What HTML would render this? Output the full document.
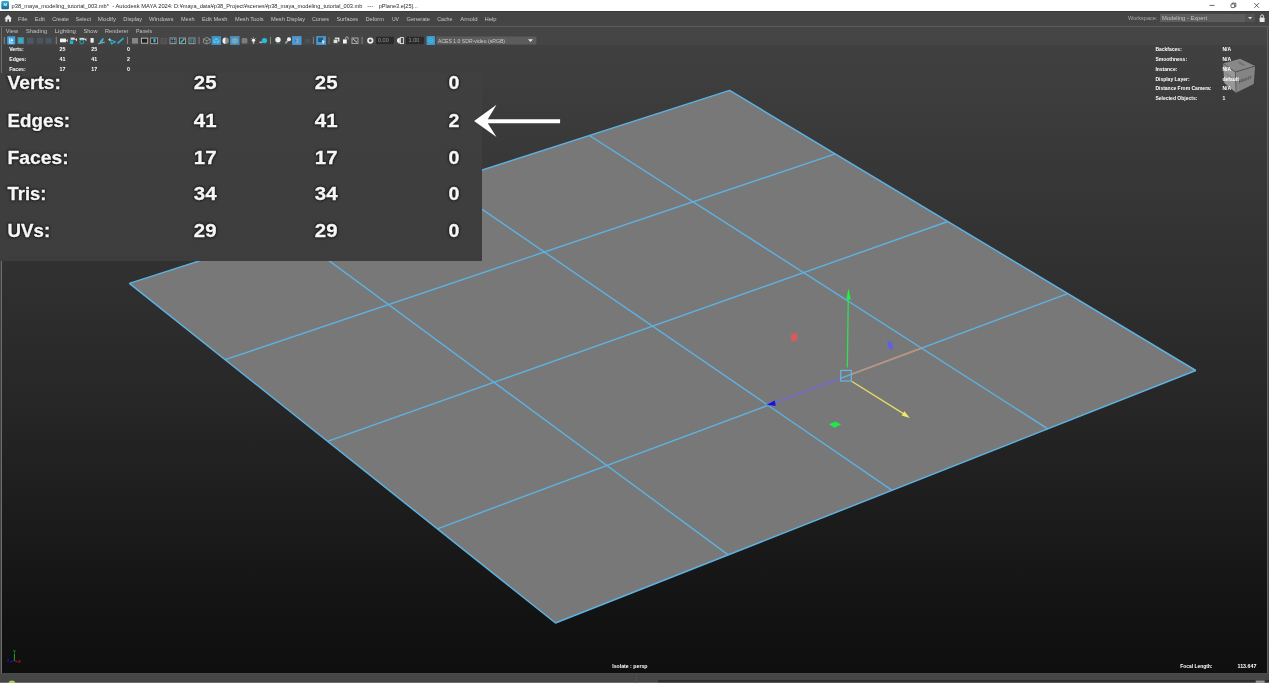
<!DOCTYPE html>
<html><head><meta charset="utf-8"><title>Maya</title>
<style>
html,body{margin:0;padding:0;background:#454545;overflow:hidden}
body{width:1269px;height:683px;position:relative;font-family:"Liberation Sans",Arial,sans-serif}
div,i,svg{position:absolute;display:block}
i{filter:blur(0.4px)}
#title{left:0;top:0;width:1269px;height:11.3px;background:#fff}
#menubar{left:0;top:11.3px;width:1269px;height:15px;background:#454545}
#hline{left:0;top:26.2px;width:1269px;height:0.7px;background:#5c5c5c}
#vp{left:2.2px;top:44.8px;width:1264.4px;height:628px;background:linear-gradient(#404040 0%,#313131 34.6%,#262626 58.2%,#121212 91.6%,#0f0f0f 100%)}
#lb1{left:0;top:26.5px;width:0.7px;height:656px;background:#444}
#lb2{left:0.7px;top:26.5px;width:1.4px;height:647px;background:#6c6c6c}
#bbar{left:0;top:672.85px;width:1269px;height:11px;background:linear-gradient(#4c4c4c,#464646 2px,#454545)}
#bbar2{left:657.9px;top:679.9px;width:612px;height:1.9px;background:#2e2e2e}
#bbar3{left:0;top:681.8px;width:1269px;height:2px;background:linear-gradient(90deg,#6e6e6e 657.9px,#5a5a5a 657.9px)}
#panel{left:0;top:72.5px;width:481.6px;height:188.9px;background:linear-gradient(#404040,#3d3d3d)}
svg text{font-family:"Liberation Sans",Arial,sans-serif}
svg text.big{font-size:18.8px;filter:drop-shadow(0 0 0.8px rgba(22,22,22,1)) drop-shadow(0 0 0.8px rgba(22,22,22,.9)) blur(0.55px);font-weight:bold;fill:#f6f6f6;stroke:#f6f6f6;stroke-width:.3px}
#rb{left:1266.6px;top:26.5px;width:1.2px;height:646.5px;background:#5e5e5e}
#tl{left:0;top:11.2px;width:1269px;height:1.1px;background:#3b3b3b}
#wsb{left:1245px;top:14px;width:9.6px;height:8.4px;background:#525252}
#ws{left:1160.3px;top:14px;width:94.3px;height:8.4px;background:#5d5d5d}
</style></head><body>
<div id="title"></div>
<div id="menubar"></div>
<div id="hline"></div>
<div id="vp"></div>
<div id="lb1"></div><div id="lb2"></div>
<div id="bbar"></div><div id="bbar2"></div><div id="bbar3"></div>
<div id="ws"></div><div id="wsb"></div><div id="rb"></div><div id="tl"></div>

<svg width="1269" height="683" viewBox="0 0 1269 683" style="left:0;top:0;filter:blur(0.3px)">
<polygon points="729.6,90.4 1195.8,370.5 555.5,623.0 129.4,283.4" fill="#787878" stroke="#5eb2e2" stroke-width="1.5" stroke-linejoin="bevel"/>
<line x1="835.3" y1="153.9" x2="225.1" y2="359.7" stroke="#5eb2e2" stroke-width="1.4"/>
<line x1="589.4" y1="135.5" x2="1047.8" y2="428.9" stroke="#5eb2e2" stroke-width="1.4"/>
<line x1="947.8" y1="221.5" x2="327.5" y2="441.3" stroke="#5eb2e2" stroke-width="1.4"/>
<line x1="443.0" y1="182.6" x2="892.1" y2="490.3" stroke="#5eb2e2" stroke-width="1.4"/>
<line x1="1067.7" y1="293.6" x2="437.4" y2="528.8" stroke="#5eb2e2" stroke-width="1.4"/>
<line x1="289.8" y1="231.8" x2="728.2" y2="554.9" stroke="#5eb2e2" stroke-width="1.4"/>
<g fill="none" stroke-linecap="butt">
<line x1="851.5" y1="374.3" x2="921.6" y2="348.1" stroke="#bd927a" stroke-width="1.7"/>
<line x1="840.5" y1="378.4" x2="770" y2="404.7" stroke="#7866be" stroke-width="1.7"/>
<line x1="847.3" y1="367.6" x2="848.3" y2="298" stroke="#30e050" stroke-width="1.3"/>
<line x1="851.6" y1="381.2" x2="903" y2="413.4" stroke="#e6de64" stroke-width="1.3"/>
<rect x="840.7" y="370.4" width="10.6" height="10.6" stroke="#6cb6de" stroke-width="1.2"/>
</g>
<polygon points="848.5,288.3 850.8,299.6 846.2,299.6" fill="#20f040"/>
<polygon points="909.8,418 901.6,415.4 904.4,411.2" fill="#f0e868"/>
<polygon points="766.3,404.9 774.8,400.6 775.8,405.8" fill="#1212f0"/>
<polygon points="790.8,334.6 797.2,332.8 797.6,340.2 791.2,341.8" fill="#d65c5c"/>
<polygon points="887.6,340.2 892.8,343.2 892.6,350.4 887.6,347" fill="#6260e2"/>
<polygon points="829,424.2 835.5,421.4 841,424.6 834.5,427.8" fill="#1cea4c"/>

<g opacity="0.93">
<polygon points="1223.1,63.6 1240,58.7 1255.1,66.1 1235.4,72" fill="#8e8e8e"/>
<polygon points="1223.1,63.6 1235.4,72 1236.1,92.8 1224.3,83" fill="#a0a0a0"/>
<polygon points="1235.4,72 1255.1,66.1 1253.7,84 1236.1,92.8" fill="#8a8a8a"/>
<polyline points="1223.1,63.6 1235.4,72 1255.1,66.1" fill="none" stroke="#4c4c4c" stroke-width="0.8"/>
<line x1="1235.4" y1="72" x2="1236.1" y2="92.8" stroke="#5a5a5a" stroke-width="0.8"/>
<text transform="matrix(1,-0.36,0,1,1238.8,83.2)" font-size="4.3" font-weight="bold" fill="#3c3c3c" opacity=".75" textLength="13" lengthAdjust="spacingAndGlyphs">RIGHT</text>
<text transform="matrix(0.83,0.5,-0.9,0.3,1237.2,62.2)" font-size="3.6" font-weight="bold" fill="#444" opacity=".7">TOP</text>
<text transform="matrix(1,0.7,0,1,1225.2,75)" font-size="4" font-weight="bold" fill="#555" opacity=".5" textLength="9.5" lengthAdjust="spacingAndGlyphs">FRONT</text>
</g>
<g stroke-width="1" fill="none">
<line x1="14.4" y1="660.9" x2="14.4" y2="653.6" stroke="#10b020"/>
<line x1="14.4" y1="660.7" x2="10" y2="661.8" stroke="#1818c0"/>
<line x1="14.4" y1="660.7" x2="17.6" y2="661.8" stroke="#c01818"/>
</g>
</svg>
<svg width="1269" height="683" viewBox="0 0 1269 683" style="left:0;top:0;filter:blur(0.4px)">
<g id="tb">
<g fill="#8c8c8c">
<rect x="3.8" y="36.8" width="0.9" height="7.2"/><rect x="55.8" y="36.8" width="0.9" height="7.2"/><rect x="127" y="36.8" width="0.9" height="7.2"/>
<rect x="198.6" y="36.8" width="0.9" height="7.2"/><rect x="270.1" y="36.8" width="0.9" height="7.2"/><rect x="312.9" y="36.8" width="0.9" height="7.2"/>
<rect x="328.6" y="37" width="0.8" height="7" opacity=".7"/><rect x="361.6" y="36.8" width="0.9" height="7.2"/>
</g>
<!-- group 1 -->
<rect x="7.2" y="36.2" width="8" height="8.2" rx=".6" fill="#38a4e0"/>
<path d="M9.2 38 h1 v4.6 h3.2 v.9 h-4.2z" fill="#e8f6fc" opacity=".9"/><path d="M11.9 38 l1.5 3.2 h-3z" fill="#f4fbfe"/>
<rect x="17.5" y="37" width="6.6" height="7" fill="#6a7a80"/><rect x="18.5" y="38" width="4.6" height="5" fill="#22b4d4"/>
<rect x="27" y="37.6" width="6.6" height="6.2" fill="#4a5968"/><rect x="37" y="37.8" width="6" height="5.8" fill="#4d555c"/><rect x="45.6" y="37.8" width="6" height="5.8" fill="#485866"/>
<!-- group 2 -->
<rect x="60" y="38.6" width="6" height="3.7" rx=".5" fill="#f0f0f0"/><polygon points="66,40.4 67.7,39 67.7,42.2" fill="#e0e0e0"/>
<rect x="70.6" y="37.6" width="4.2" height="2.2" fill="#dcdcdc"/><polygon points="75,39.6 77,38 77,41.6" fill="#e4e4e4"/><rect x="69.8" y="40.3" width="3.4" height="3.7" fill="#22b0cc"/>
<rect x="79.5" y="37.9" width="5" height="2" fill="#dcdcdc"/><polygon points="84.5,39.4 86.3,38 86.3,41.2" fill="#e4e4e4"/><circle cx="81.7" cy="41.9" r="1.9" fill="none" stroke="#28a8bc" stroke-width="1"/>
<rect x="90.5" y="38" width="3.2" height="4.7" rx=".6" fill="#ececec"/>
<path d="M99.3 43.2 Q100 39.5 103.6 37.8 Q104 41 101.2 43z" fill="#28b8d0"/><path d="M98 43.8 L104.8 42.2" stroke="#b0b0b0" stroke-width=".9"/>
<path d="M108.4 39.6 h2.6 M109.7 38.2 v2.8" stroke="#e0e0e0" stroke-width=".8"/><path d="M110.6 40 L115.4 41.8 L111.4 44z" fill="none" stroke="#28b4c8" stroke-width="1.1"/>
<path d="M117.6 43.4 L123.5 38.2" stroke="#2cb0d4" stroke-width="1.6"/>
<!-- group 3 -->
<rect x="132" y="38" width="6" height="5.6" fill="#868686"/>
<rect x="141.5" y="38.2" width="6.2" height="5" fill="#1e1e1e" stroke="#b4b4b4" stroke-width="1"/>
<rect x="150.6" y="38" width="7" height="5.6" fill="#2a2a2a" stroke="#9a9a9a" stroke-width="1"/><rect x="153.4" y="38.8" width="2.2" height="3.8" rx="1" fill="#30c0e0"/>
<rect x="161" y="38.4" width="5.6" height="5" fill="#4e4e4e" stroke="#5c5c5c" stroke-width=".8"/>
<rect x="170" y="38" width="6" height="5.6" fill="#333" stroke="#9a9a9a" stroke-width="1"/><path d="M171.6 39.6 h1.2 M173.8 39.6 h1.2 M171.6 42 h1.2 M173.8 42 h1.2" stroke="#40c0d8" stroke-width="1"/>
<rect x="179.5" y="38" width="6" height="5.6" fill="#333" stroke="#9a9a9a" stroke-width="1"/><path d="M180.6 42.8 L184.4 38.8" stroke="#38c0d8" stroke-width="1.6"/>
<rect x="189" y="38" width="6" height="5.6" fill="#2a2a2a" stroke="#9a9a9a" stroke-width="1"/><path d="M191 39 v3.8 M193.2 39 v3.8" stroke="#38c0d8" stroke-width="1"/>
<!-- group 4 -->
<path d="M206.8 37.4 L210.2 39.2 V42.6 L206.8 44 L203.4 42.6 V39.2z M203.4 39.2 L206.8 40.8 L210.2 39.2 M206.8 40.8 V44" fill="none" stroke="#a0a0a0" stroke-width=".8"/>
<rect x="211.6" y="36.1" width="9.4" height="8.8" fill="#3f93cc"/><path d="M216.3 37.8 L219.4 39.4 V42.6 L216.3 43.8 L213.2 42.6 V39.4z" fill="#58c4e0"/><path d="M213.2 39.4 L216.3 40.8 L219.4 39.4 M216.3 40.8 V43.8" stroke="#2a88b0" stroke-width=".6" fill="none"/>
<path d="M225.7 37.6 a3.2 3.2 0 0 0 0 6.4z" fill="#f2f2f2"/><path d="M225.7 37.6 a3.2 3.2 0 0 1 0 6.4z" fill="#8a8a8a"/>
<rect x="230.1" y="36.1" width="9.4" height="8.8" fill="#4a90c8"/><path d="M234.8 37.8 L237.9 39.4 V42.6 L234.8 43.8 L231.7 42.6 V39.4z" fill="#8aa8b0"/><path d="M232.6 40.6 h1.6 M235.4 40.6 h1.6 M232.6 42.2 h1.6 M235.4 42.2 h1.6" stroke="#30b8c8" stroke-width=".8"/>
<rect x="241.6" y="38" width="5.8" height="5.6" rx="1.4" fill="#7c7c7c"/>
<circle cx="253.5" cy="40.3" r="1.7" fill="#f0f0f0"/><rect x="252.8" y="41.6" width="1.4" height="2.2" fill="#c8c8c8"/><path d="M250.8 38 l1 1 M256.2 38 l-1 1 M253.5 37 v1" stroke="#c0c0c0" stroke-width=".6"/>
<rect x="259.4" y="41.6" width="3" height="1.5" fill="#b8b8b8"/><circle cx="264.4" cy="40.6" r="2.7" fill="#20c0dc"/>
<!-- group 5 -->
<ellipse cx="278" cy="43.4" rx="2.6" ry=".8" fill="#2a7078" opacity=".8"/><circle cx="278" cy="39.7" r="2.7" fill="#f0f0f0"/>
<path d="M285.4 43.4 L288.4 40" stroke="#a8a8a8" stroke-width="1.6"/><circle cx="289" cy="39.2" r="2" fill="#f0f0f0"/>
<rect x="292.1" y="36.1" width="9.4" height="8.8" fill="#4898d8"/><path d="M296.6 38.4 l2.2 1.4 l-2.2 1.4z M296.6 40.6 l2.2 1.4 l-2.2 1.4z" fill="#b8a898"/><circle cx="295.6" cy="40.6" r=".8" fill="#3070d0"/>
<rect x="304.6" y="39" width="5.4" height="4.2" fill="#47585a" opacity=".8"/>
<rect x="316.2" y="36.1" width="9.8" height="8.8" fill="#4898d8"/><rect x="318" y="37.6" width="5" height="4.4" fill="#1e5a6a"/><polygon points="322,39.8 325,41.8 323.6,42.2 324,43.8 322.6,43.6" fill="#f0f0e8"/>
<rect x="334.8" y="37.6" width="4.6" height="4" fill="#f0f0f0"/><rect x="333.2" y="39.2" width="4.6" height="4.2" fill="#e0e0e0" stroke="#444" stroke-width=".7"/>
<rect x="343" y="39.4" width="3.8" height="4.1" fill="#f4f4f4"/><path d="M345.6 39.2 v-1 a1.3 1.3 0 0 1 2.6 0 v1.2" stroke="#b8b8b8" stroke-width=".9" fill="none"/>
<rect x="352" y="38" width="6" height="5.4" fill="none" stroke="#b4b4b4" stroke-width=".9"/><path d="M353 39 L357 42.4" stroke="#d0d0d0" stroke-width="1"/>
<circle cx="370.3" cy="40.6" r="2.3" fill="none" stroke="#ececec" stroke-width="1.7"/>
<rect x="376" y="36.8" width="18" height="7.4" rx=".8" fill="#2a2a2a"/>
<path d="M399.8 37.8 a2.8 2.8 0 0 0 0 5.6z" fill="#f0f0f0"/><rect x="400.4" y="37.6" width="3" height="6" fill="none" stroke="#e8e8e8" stroke-width=".9"/>
<rect x="406" y="36.8" width="18" height="7.4" rx=".8" fill="#2a2a2a"/>
<rect x="426.5" y="36" width="8.5" height="9" rx=".6" fill="#4694cc"/><circle cx="430.7" cy="40.5" r="2.3" fill="none" stroke="#30ccdc" stroke-width="1"/><path d="M429.8 40.5 h2.2" stroke="#30ccdc" stroke-width=".9"/>
<rect x="436.4" y="36.6" width="100" height="7.8" rx=".8" fill="#5c5c5c"/>
</g>
</svg>
<div id="panel"></div>
<svg width="1269" height="683" viewBox="0 0 1269 683" style="left:0;top:0;filter:blur(0.35px)">
<polygon points="474.1,121 496.5,104.7 487.8,119.15 560.1,119.15 560.1,123.2 487.8,123.2 496.5,137.1" fill="#ffffff"/>
<!-- app icon -->
<defs><linearGradient id="ag" x1="0" y1="0" x2="0" y2="1"><stop offset="0" stop-color="#2eaed6"/><stop offset="1" stop-color="#1a6890"/></linearGradient></defs>
<rect x="1.3" y="1.1" width="7.7" height="8.2" rx="1.3" fill="url(#ag)"/>
<text x="3.4" y="5.9" font-size="4.4" font-weight="bold" fill="#eef8fc">M</text>
<!-- home -->
<polygon points="8.2,14.8 12,18.4 11,18.4 11,21.8 9,21.8 9,19.6 7.4,19.6 7.4,21.8 5.4,21.8 5.4,18.4 4.4,18.4" fill="#e8e8e8"/>
<!-- window controls -->
<line x1="1209.5" y1="5.4" x2="1214.5" y2="5.4" stroke="#222" stroke-width="0.7"/>
<rect x="1231" y="4" width="3.6" height="3.6" rx=".7" fill="none" stroke="#222" stroke-width="0.7"/><path d="M1232.2 4 v-.9 h3.6 v3.6 h-1" fill="none" stroke="#222" stroke-width="0.7"/>
<path d="M1254.3 3.1 L1259 7.8 M1259 3.1 L1254.3 7.8" stroke="#222" stroke-width="0.7" fill="none"/>
<!-- dropdown arrows, lock -->
<polygon points="1248,16.9 1252.2,16.9 1250.1,19.3" fill="#e0e0e0"/>
<rect x="1259.6" y="17.6" width="5" height="4.4" rx=".6" fill="#e8e8e8"/>
<path d="M1260.7 17.6 v-1.4 a1.4 1.4 0 0 1 2.8 0 v1.4" stroke="#e8e8e8" stroke-width=".9" fill="none"/>
<polygon points="528,39.2 533,39.2 530.5,42" fill="#e4e4e4"/>
<!-- green dot -->
<circle cx="11.9" cy="684.2" r="3.6" fill="#a8d060"/>
<rect x="1255.7" y="680.5" width="9" height="2.5" fill="#969696"/><rect x="636.2" y="674" width=".8" height="9" fill="#515151"/>
<text x="11.6" y="7.66" font-size="6" font-weight="normal" fill="#2a2a2a" textLength="97.3" lengthAdjust="spacingAndGlyphs" xml:space="preserve">p38_maya_modeling_tutorial_003.mb*</text>
<text x="112.2" y="7.66" font-size="6" font-weight="normal" fill="#2a2a2a" textLength="60.5" lengthAdjust="spacingAndGlyphs" xml:space="preserve">- Autodesk MAYA 2024:</text>
<text x="174" y="7.66" font-size="6" font-weight="normal" fill="#2a2a2a" textLength="188.4" lengthAdjust="spacingAndGlyphs" xml:space="preserve">D:¥maya_data¥p38_Project¥scenes¥p38_maya_modeling_tutorial_003.mb</text>
<text x="367.2" y="7.66" font-size="6" font-weight="normal" fill="#2a2a2a" textLength="6.5" lengthAdjust="spacingAndGlyphs" xml:space="preserve">---</text>
<text x="378.7" y="7.66" font-size="6" font-weight="normal" fill="#2a2a2a" textLength="39.1" lengthAdjust="spacingAndGlyphs" xml:space="preserve">pPlane3.e[25]...</text>
<text x="18" y="20.56" font-size="6" font-weight="normal" fill="#c6c6c6" textLength="9.5" lengthAdjust="spacingAndGlyphs" xml:space="preserve">File</text>
<text x="34.8" y="20.56" font-size="6" font-weight="normal" fill="#c6c6c6" textLength="10.2" lengthAdjust="spacingAndGlyphs" xml:space="preserve">Edit</text>
<text x="52.2" y="20.56" font-size="6" font-weight="normal" fill="#c6c6c6" textLength="16.8" lengthAdjust="spacingAndGlyphs" xml:space="preserve">Create</text>
<text x="75.6" y="20.56" font-size="6" font-weight="normal" fill="#c6c6c6" textLength="15.4" lengthAdjust="spacingAndGlyphs" xml:space="preserve">Select</text>
<text x="97.8" y="20.56" font-size="6" font-weight="normal" fill="#c6c6c6" textLength="18.2" lengthAdjust="spacingAndGlyphs" xml:space="preserve">Modify</text>
<text x="123.3" y="20.56" font-size="6" font-weight="normal" fill="#c6c6c6" textLength="18.7" lengthAdjust="spacingAndGlyphs" xml:space="preserve">Display</text>
<text x="149" y="20.56" font-size="6" font-weight="normal" fill="#c6c6c6" textLength="24.5" lengthAdjust="spacingAndGlyphs" xml:space="preserve">Windows</text>
<text x="181" y="20.56" font-size="6" font-weight="normal" fill="#c6c6c6" textLength="13.5" lengthAdjust="spacingAndGlyphs" xml:space="preserve">Mesh</text>
<text x="202" y="20.56" font-size="6" font-weight="normal" fill="#c6c6c6" textLength="25.5" lengthAdjust="spacingAndGlyphs" xml:space="preserve">Edit Mesh</text>
<text x="235" y="20.56" font-size="6" font-weight="normal" fill="#c6c6c6" textLength="28.5" lengthAdjust="spacingAndGlyphs" xml:space="preserve">Mesh Tools</text>
<text x="271" y="20.56" font-size="6" font-weight="normal" fill="#c6c6c6" textLength="34.0" lengthAdjust="spacingAndGlyphs" xml:space="preserve">Mesh Display</text>
<text x="312" y="20.56" font-size="6" font-weight="normal" fill="#c6c6c6" textLength="17.0" lengthAdjust="spacingAndGlyphs" xml:space="preserve">Curves</text>
<text x="336.4" y="20.56" font-size="6" font-weight="normal" fill="#c6c6c6" textLength="21.6" lengthAdjust="spacingAndGlyphs" xml:space="preserve">Surfaces</text>
<text x="365.4" y="20.56" font-size="6" font-weight="normal" fill="#c6c6c6" textLength="18.6" lengthAdjust="spacingAndGlyphs" xml:space="preserve">Deform</text>
<text x="391.9" y="20.56" font-size="6" font-weight="normal" fill="#c6c6c6" textLength="7.1" lengthAdjust="spacingAndGlyphs" xml:space="preserve">UV</text>
<text x="406.5" y="20.56" font-size="6" font-weight="normal" fill="#c6c6c6" textLength="23.5" lengthAdjust="spacingAndGlyphs" xml:space="preserve">Generate</text>
<text x="437.2" y="20.56" font-size="6" font-weight="normal" fill="#c6c6c6" textLength="15.3" lengthAdjust="spacingAndGlyphs" xml:space="preserve">Cache</text>
<text x="460.2" y="20.56" font-size="6" font-weight="normal" fill="#c6c6c6" textLength="17.3" lengthAdjust="spacingAndGlyphs" xml:space="preserve">Arnold</text>
<text x="484.4" y="20.56" font-size="6" font-weight="normal" fill="#c6c6c6" textLength="12.1" lengthAdjust="spacingAndGlyphs" xml:space="preserve">Help</text>
<text x="5.8" y="33.39" font-size="5.8" font-weight="normal" fill="#c4c4c4" textLength="12.2" lengthAdjust="spacingAndGlyphs" xml:space="preserve">View</text>
<text x="26" y="33.39" font-size="5.8" font-weight="normal" fill="#c4c4c4" textLength="21.2" lengthAdjust="spacingAndGlyphs" xml:space="preserve">Shading</text>
<text x="54.7" y="33.39" font-size="5.8" font-weight="normal" fill="#c4c4c4" textLength="21.3" lengthAdjust="spacingAndGlyphs" xml:space="preserve">Lighting</text>
<text x="83.5" y="33.39" font-size="5.8" font-weight="normal" fill="#c4c4c4" textLength="14.0" lengthAdjust="spacingAndGlyphs" xml:space="preserve">Show</text>
<text x="105" y="33.39" font-size="5.8" font-weight="normal" fill="#c4c4c4" textLength="23.5" lengthAdjust="spacingAndGlyphs" xml:space="preserve">Renderer</text>
<text x="136" y="33.39" font-size="5.8" font-weight="normal" fill="#c4c4c4" textLength="16.0" lengthAdjust="spacingAndGlyphs" xml:space="preserve">Panels</text>
<text x="9.2" y="50.87" font-size="5.2" font-weight="bold" fill="#fff" xml:space="preserve">Verts:</text>
<text x="59.6" y="50.91" font-size="5.3" font-weight="bold" fill="#fff" xml:space="preserve">25</text>
<text x="91.3" y="50.91" font-size="5.3" font-weight="bold" fill="#fff" xml:space="preserve">25</text>
<text x="127.1" y="50.91" font-size="5.3" font-weight="bold" fill="#fff" xml:space="preserve">0</text>
<text x="9.2" y="60.77" font-size="5.2" font-weight="bold" fill="#fff" xml:space="preserve">Edges:</text>
<text x="59.6" y="60.81" font-size="5.3" font-weight="bold" fill="#fff" xml:space="preserve">41</text>
<text x="91.3" y="60.81" font-size="5.3" font-weight="bold" fill="#fff" xml:space="preserve">41</text>
<text x="127.1" y="60.81" font-size="5.3" font-weight="bold" fill="#fff" xml:space="preserve">2</text>
<text x="9.2" y="70.57" font-size="5.2" font-weight="bold" fill="#fff" xml:space="preserve">Faces:</text>
<text x="59.6" y="70.61" font-size="5.3" font-weight="bold" fill="#fff" xml:space="preserve">17</text>
<text x="91.3" y="70.61" font-size="5.3" font-weight="bold" fill="#fff" xml:space="preserve">17</text>
<text x="127.1" y="70.61" font-size="5.3" font-weight="bold" fill="#fff" xml:space="preserve">0</text>
<text x="1155.4" y="51.00" font-size="5" font-weight="bold" fill="#fff" xml:space="preserve">Backfaces:</text>
<text x="1222.5" y="51.00" font-size="5" font-weight="bold" fill="#fff" xml:space="preserve">N/A</text>
<text x="1155.4" y="60.70" font-size="5" font-weight="bold" fill="#fff" xml:space="preserve">Smoothness:</text>
<text x="1222.5" y="60.70" font-size="5" font-weight="bold" fill="#fff" xml:space="preserve">N/A</text>
<text x="1155.4" y="70.50" font-size="5" font-weight="bold" fill="#fff" xml:space="preserve">Instance:</text>
<text x="1222.5" y="70.50" font-size="5" font-weight="bold" fill="#fff" xml:space="preserve">N/A</text>
<text x="1155.4" y="80.50" font-size="5" font-weight="bold" fill="#fff" xml:space="preserve">Display Layer:</text>
<text x="1222.5" y="80.50" font-size="5" font-weight="bold" fill="#fff" xml:space="preserve">default</text>
<text x="1155.4" y="90.40" font-size="5" font-weight="bold" fill="#fff" xml:space="preserve">Distance From Camera:</text>
<text x="1222.5" y="90.40" font-size="5" font-weight="bold" fill="#fff" xml:space="preserve">N/A</text>
<text x="1155.4" y="100.20" font-size="5" font-weight="bold" fill="#fff" xml:space="preserve">Selected Objects:</text>
<text x="1222.5" y="100.20" font-size="5" font-weight="bold" fill="#fff" xml:space="preserve">1</text>
<text x="612.2" y="668.20" font-size="5" font-weight="bold" fill="#fff" textLength="35.3" lengthAdjust="spacingAndGlyphs" xml:space="preserve">Isolate : persp</text>
<text x="1180.2" y="668.20" font-size="5" font-weight="bold" fill="#fff" textLength="32.3" lengthAdjust="spacingAndGlyphs" xml:space="preserve">Focal Length:</text>
<text x="1237.5" y="668.20" font-size="5" font-weight="bold" fill="#fff" textLength="18.9" lengthAdjust="spacingAndGlyphs" xml:space="preserve">113.647</text>
<text x="1128" y="20.49" font-size="5.8" font-weight="normal" fill="#aaa" textLength="29.5" lengthAdjust="spacingAndGlyphs" xml:space="preserve">Workspace:</text>
<text x="1162" y="20.49" font-size="5.8" font-weight="normal" fill="#c4c4c4" textLength="45.0" lengthAdjust="spacingAndGlyphs" xml:space="preserve">Modeling - Expert</text>
<text x="378" y="42.48" font-size="5.5" font-weight="normal" fill="#969696" xml:space="preserve">0.00</text>
<text x="408.6" y="42.48" font-size="5.5" font-weight="normal" fill="#969696" xml:space="preserve">1.00</text>
<text x="438" y="42.62" font-size="5.6" font-weight="normal" fill="#ccc" textLength="67.0" lengthAdjust="spacingAndGlyphs" xml:space="preserve">ACES 1.0 SDR-video (sRGB)</text>
<text x="13.2" y="652.50" font-size="3.6" font-weight="bold" fill="#20c030" xml:space="preserve">Y</text>
<text x="7.1" y="662.30" font-size="3.6" font-weight="bold" fill="#2020d0" xml:space="preserve">Z</text>
<text x="18.2" y="662.50" font-size="3.6" font-weight="bold" fill="#d02020" xml:space="preserve">X</text>
<text class="big" x="7.6" y="89.3" textLength="53.3" lengthAdjust="spacingAndGlyphs">Verts:</text>
<text class="big" x="193.8" y="89.3" textLength="22.7" lengthAdjust="spacingAndGlyphs">25</text>
<text class="big" x="314.8" y="89.3" textLength="22.7" lengthAdjust="spacingAndGlyphs">25</text>
<text class="big" x="448.4" y="89.3" textLength="10.9" lengthAdjust="spacingAndGlyphs">0</text>
<text class="big" x="7.6" y="126.5" textLength="62.5" lengthAdjust="spacingAndGlyphs">Edges:</text>
<text class="big" x="193.8" y="126.5" textLength="22.7" lengthAdjust="spacingAndGlyphs">41</text>
<text class="big" x="314.8" y="126.5" textLength="22.7" lengthAdjust="spacingAndGlyphs">41</text>
<text class="big" x="448.4" y="126.5" textLength="10.9" lengthAdjust="spacingAndGlyphs">2</text>
<text class="big" x="7.6" y="163.5" textLength="61.1" lengthAdjust="spacingAndGlyphs">Faces:</text>
<text class="big" x="193.8" y="163.5" textLength="22.7" lengthAdjust="spacingAndGlyphs">17</text>
<text class="big" x="314.8" y="163.5" textLength="22.7" lengthAdjust="spacingAndGlyphs">17</text>
<text class="big" x="448.4" y="163.5" textLength="10.9" lengthAdjust="spacingAndGlyphs">0</text>
<text class="big" x="7.6" y="200.4" textLength="38.8" lengthAdjust="spacingAndGlyphs">Tris:</text>
<text class="big" x="193.8" y="200.4" textLength="22.7" lengthAdjust="spacingAndGlyphs">34</text>
<text class="big" x="314.8" y="200.4" textLength="22.7" lengthAdjust="spacingAndGlyphs">34</text>
<text class="big" x="448.4" y="200.4" textLength="10.9" lengthAdjust="spacingAndGlyphs">0</text>
<text class="big" x="7.6" y="237.3" textLength="42.5" lengthAdjust="spacingAndGlyphs">UVs:</text>
<text class="big" x="193.8" y="237.3" textLength="22.7" lengthAdjust="spacingAndGlyphs">29</text>
<text class="big" x="314.8" y="237.3" textLength="22.7" lengthAdjust="spacingAndGlyphs">29</text>
<text class="big" x="448.4" y="237.3" textLength="10.9" lengthAdjust="spacingAndGlyphs">0</text>
</svg>
</body></html>
